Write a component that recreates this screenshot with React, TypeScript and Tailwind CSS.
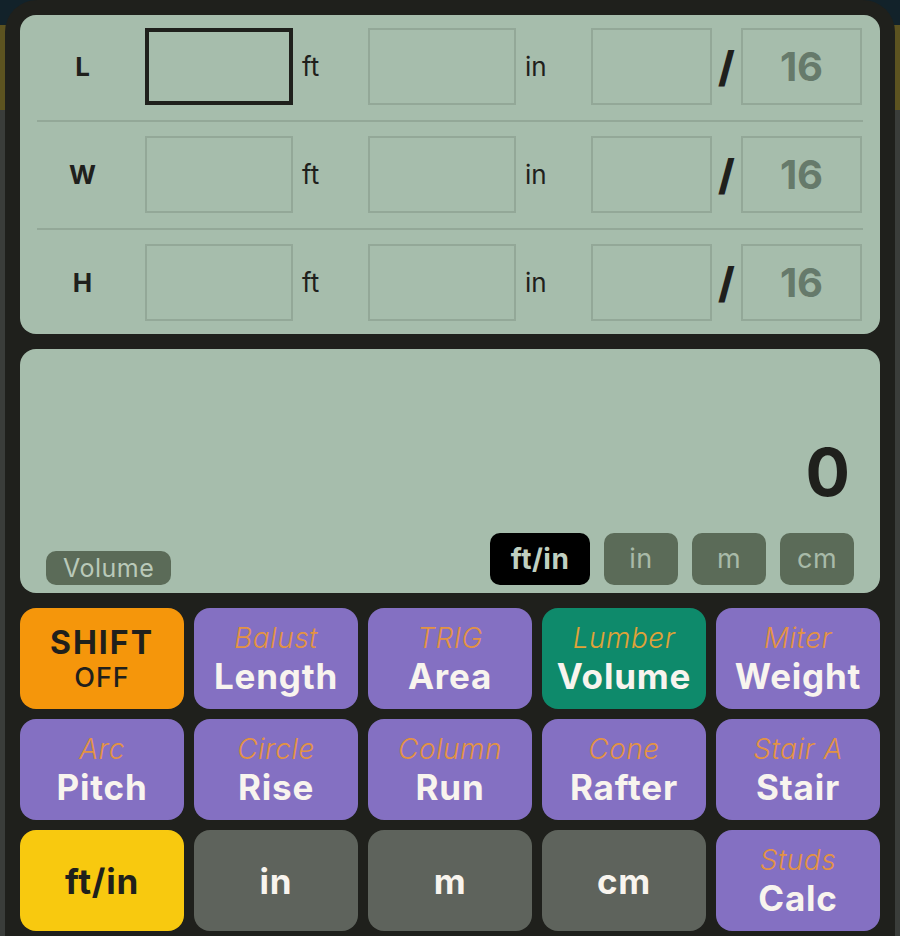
import React from "react";

const font = { fontFamily: "Inter, 'Noto Sans', sans-serif" };

// measurement rows of the dimension entry panel
const dims = ["L", "W", "H"];

function Box({ w, active, children }: { w: string; active?: boolean; children?: React.ReactNode }) {
  return (
    <div
      className={`${w} flex h-[77px] shrink-0 items-center justify-center ${
        active ? "border-[4px] border-[#1f201c]" : "border-2 border-[#93a898]"
      }`}
    >
      {children}
    </div>
  );
}

function DimRow({ label, active }: { label: string; active?: boolean }) {
  return (
    <div className="flex h-[77px] items-center">
      <div className="flex w-[125px] shrink-0 justify-center text-[26px] font-bold text-[#1f201c]">{label}</div>
      <Box w="w-[148px]" active={active} />
      <div className="w-[75px] shrink-0 pl-[9px] text-[26px] text-[#1f201c]">ft</div>
      <Box w="w-[148px]" />
      <div className="w-[75px] shrink-0 pl-[9px] text-[26px] text-[#1f201c]">in</div>
      <Box w="w-[121px]" />
      <div className="flex w-[29px] shrink-0 justify-center text-[42px] font-extrabold leading-none text-[#1f201c]">/</div>
      <Box w="w-[121px]">
        <span className="text-[40px] font-bold text-[#667a6b]">16</span>
      </Box>
    </div>
  );
}

type Key = { sub?: string; main: string; tone: "purple" | "orange" | "teal" | "yellow" | "gray" };

const keys: Key[] = [
  { main: "SHIFT", tone: "orange" },
  { sub: "Balust", main: "Length", tone: "purple" },
  { sub: "TRIG", main: "Area", tone: "purple" },
  { sub: "Lumber", main: "Volume", tone: "teal" },
  { sub: "Miter", main: "Weight", tone: "purple" },
  { sub: "Arc", main: "Pitch", tone: "purple" },
  { sub: "Circle", main: "Rise", tone: "purple" },
  { sub: "Column", main: "Run", tone: "purple" },
  { sub: "Cone", main: "Rafter", tone: "purple" },
  { sub: "Stair A", main: "Stair", tone: "purple" },
  { main: "ft/in", tone: "yellow" },
  { main: "in", tone: "gray" },
  { main: "m", tone: "gray" },
  { main: "cm", tone: "gray" },
  { sub: "Studs", main: "Calc", tone: "purple" },
];

const toneBg: Record<Key["tone"], string> = {
  purple: "bg-[#8470c2]",
  orange: "bg-[#f5960b]",
  teal: "bg-[#0e8a6b]",
  yellow: "bg-[#f8c90f]",
  gray: "bg-[#5e635c]",
};

function CalcKey({ k }: { k: Key }) {
  if (k.tone === "orange") {
    return (
      <button className={`${toneBg[k.tone]} flex h-[101px] flex-col items-center justify-center rounded-[16px] text-[#1f201c]`}>
        <span className="text-[32px] font-bold leading-[38px] tracking-[2px]">SHIFT</span>
        <span className="text-[27px] font-medium leading-[32px] tracking-[1px]">OFF</span>
      </button>
    );
  }
  const dark = k.tone === "yellow";
  return (
    <button className={`${toneBg[k.tone]} flex h-[101px] flex-col items-center justify-center rounded-[16px]`}>
      {k.sub && (
        <span
          className={`text-[28px] font-light italic leading-[34px] tracking-[0.5px] ${
            k.tone === "teal" ? "text-[#e0a238]" : "text-[#e39343]"
          }`}
        >
          {k.sub}
        </span>
      )}
      <span className={`text-[35px] font-bold leading-[42px] tracking-[0.8px] ${dark ? "text-[#1f201c]" : "text-[#f8f4ee]"}`}>
        {k.main}
      </span>
    </button>
  );
}

export default function App() {
  return (
    <div
      style={font}
      className="h-[936px] w-[900px] overflow-hidden bg-[linear-gradient(to_bottom,#12222a_0px,#12222a_25px,#5c5320_25px,#5c5320_110px,#3a3d3a_110px)]"
    >
      <div className="mx-[5px] flex h-[936px] flex-col gap-[15px] rounded-t-[32px] bg-[#1f201c] px-[15px] pt-[15px]">
        <div className="rounded-[16px] bg-[#a6bdac] pb-[13px] pt-[13px]">
          {dims.map((d, i) => (
            <div key={d}>
              {i > 0 && <div className="mx-[17px] mb-[14px] mt-[15px] h-[2px] bg-[#93a898]" />}
              <DimRow label={d} active={i === 0} />
            </div>
          ))}
        </div>

        <div className="flex h-[244px] flex-col rounded-[16px] bg-[#a6bdac] px-[26px] pb-[8px]">
          <div className="flex flex-1 items-end justify-end pb-[28px] pr-[4px]">
            <span className="text-[66px] font-bold leading-none text-[#1f201c]">0</span>
          </div>
          <div className="flex items-end justify-between">
            <div className="rounded-[10px] bg-[#5b6b58] px-[17px] py-[2px] text-[25px] leading-[30px] tracking-[0.5px] text-[#b9c9b9]">
              Volume
            </div>
            <div className="flex gap-[14px]">
              <div className="flex h-[52px] w-[100px] items-center justify-center rounded-[10px] bg-black text-[28px] font-bold tracking-[0.5px] text-[#c0d0c0]">
                ft/in
              </div>
              {["in", "m", "cm"].map((u) => (
                <div
                  key={u}
                  className="flex h-[52px] w-[74px] items-center justify-center rounded-[10px] bg-[#5b6b58] text-[27px] tracking-[0.5px] text-[#a8baa8]"
                >
                  {u}
                </div>
              ))}
            </div>
          </div>
        </div>

        <div className="grid grid-cols-5 gap-x-[10px] gap-y-[10px]">
          {keys.map((k) => (
            <CalcKey key={k.main + (k.sub ?? "")} k={k} />
          ))}
        </div>
      </div>
    </div>
  );
}
